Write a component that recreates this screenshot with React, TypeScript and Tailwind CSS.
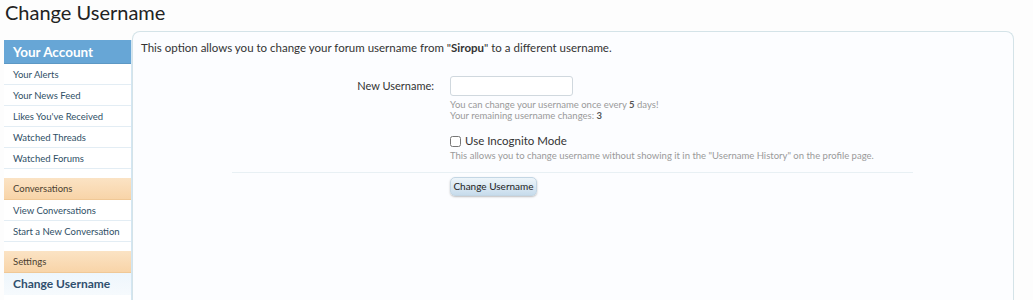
const font = "font-['Lato','Liberation_Sans',sans-serif]";

function NavRow({ label }: { label: string }) {
	return (
		<div className="h-[21px] border-b border-[#e3edf4] pl-[9px] text-[9.5px] leading-[21px] text-[#2f4f66]">
			{label}
		</div>
	);
}

function NavSection({ title }: { title: string }) {
	return (
		<div className="mt-[9px] h-[22px] border-b border-[#f0c896] bg-gradient-to-b from-[#fbe3c4] to-[#f8d4a8] pl-[9px] text-[9.5px] leading-[22px] text-[#4b4030]">
			{title}
		</div>
	);
}

function Sidebar() {
	return (
		<div className="ml-[4px] mt-[9px] w-[128px] shrink-0 border-r border-[#d3e6f3] bg-white">
			<div className="h-[24px] border-b border-[#5d98c4] bg-[#67a6d6] pl-[9px] text-[13.5px] font-bold leading-[24px] text-white">
				Your Account
			</div>
			<NavRow label="Your Alerts" />
			<NavRow label="Your News Feed" />
			<NavRow label="Likes You've Received" />
			<NavRow label="Watched Threads" />
			<NavRow label="Watched Forums" />
			<NavSection title="Conversations" />
			<NavRow label="View Conversations" />
			<NavRow label="Start a New Conversation" />
			<NavSection title="Settings" />
			<div className="h-[22px] bg-gradient-to-b from-[#eef6fc] to-[#f6fafd] pl-[9px] text-[12px] font-bold leading-[22px] text-[#2f4f6e]">
				Change Username
			</div>
		</div>
	);
}

function ChangeForm() {
	return (
		<div className="ml-[91px] mr-[92px] mt-[21px]">
			<div className="flex">
				<div className="w-[204px] pr-[2px] text-right text-[11px] leading-[20px] text-[#333]">
					New Username:
				</div>
				<div className="ml-[14px] flex-1">
					<input
						type="text"
						className="block h-[20px] w-[123px] rounded-[3px] border border-[#d0d8de] bg-white"
					/>
					<div className="mt-[3px] text-[9.5px] leading-[11px] text-[#9a9a9a]">
						You can change your username once every{" "}
						<b className="text-[#555]">5</b> days!
						<br />
						Your remaining username changes: <b className="text-[#555]">3</b>
					</div>
					<label className="mt-[13px] flex items-center text-[11.5px] leading-[14px] text-[#333]">
						<input
							type="checkbox"
							className="m-0 h-[11px] w-[11px] accent-[#ddd]"
						/>
						<span className="ml-[4px]">Use Incognito Mode</span>
					</label>
					<div className="mt-[2px] text-[9.5px] leading-[12px] text-[#9a9a9a]">
						This allows you to change username without showing it in the
						"Username History" on the profile page.
					</div>
				</div>
			</div>
			<div className="mt-[10px] border-t border-[#e8f0f4]" />
			<div className="ml-[218px] mt-[4px] flex">
				<button className="h-[19px] w-[87px] rounded-[5px] border border-[#c3d6e4] bg-gradient-to-b from-[#eef5fa] to-[#c7dcec] text-[10px] leading-[17px] text-[#222] shadow-[0_1px_2px_rgba(0,0,0,0.25)]">
					Change Username
				</button>
			</div>
		</div>
	);
}

export default function App() {
	return (
		<div
			className={`${font} h-[300px] w-[1033px] overflow-hidden bg-[#fdfdfd]`}
		>
			<h1 className="h-[31px] pl-[5px] text-[20px] leading-[24px] text-[#222]">
				Change Username
			</h1>
			<div className="flex">
				<Sidebar />
				<div className="mr-[19px] h-[269px] flex-1 rounded-t-[8px] border border-b-0 border-[#d4e3e8] bg-[#fcfdff] pl-[8px] pr-[8px] pt-[8px]">
					<div className="text-[11.5px] leading-[15px] text-[#333]">
						This option allows you to change your forum username from "
						<b>Siropu</b>" to a different username.
					</div>
					<ChangeForm />
				</div>
			</div>
		</div>
	);
}
